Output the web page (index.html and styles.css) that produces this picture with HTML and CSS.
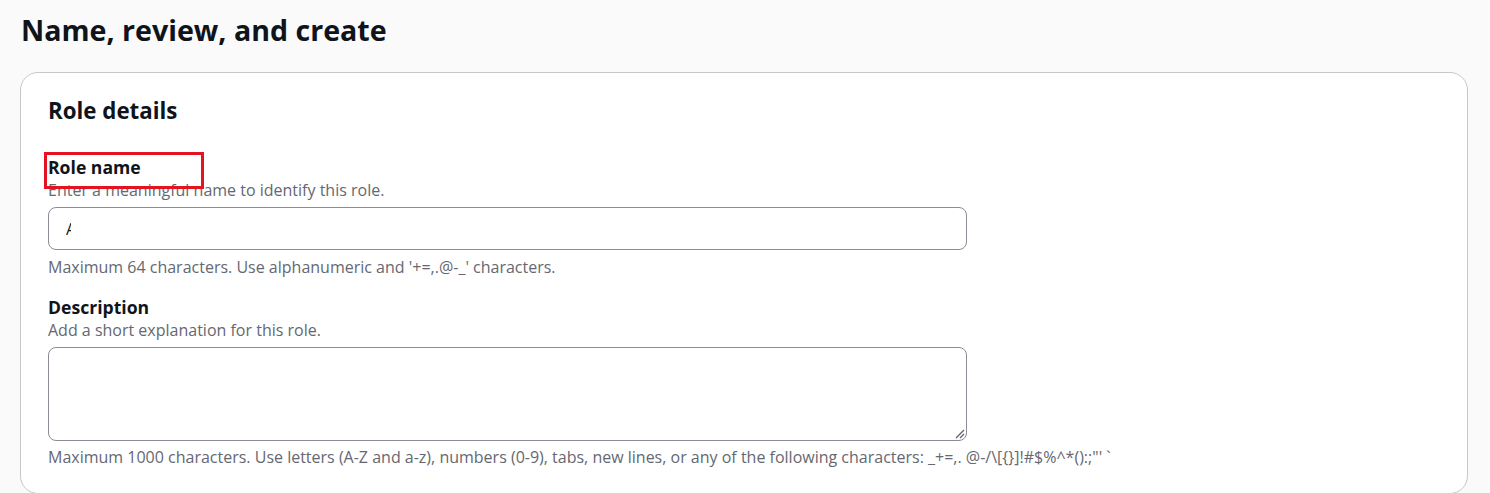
FILE: index.html
```html
<!DOCTYPE html>
<html lang="en">
<head>
<meta charset="utf-8">
<title>Name, review, and create</title>
<link rel="stylesheet" href="styles.css">
</head>
<body>
<main class="page">
  <h1 class="page-title">Name, review, and create</h1>
  <section class="card">
    <h2 class="card-title">Role details</h2>
    <div class="field field-first">
      <div class="label-wrap">
        <label class="label" for="role-name">Role name</label>
        <span class="highlight"></span>
      </div>
      <div class="desc">Enter a meaningful name to identify this role.</div>
      <div class="input"><span class="typed">A</span></div>
      <div class="constraint">Maximum 64 characters. Use alphanumeric and '+=,.@-_' characters.</div>
    </div>
    <div class="field field-second">
      <label class="label" for="role-desc">Description</label>
      <div class="desc">Add a short explanation for this role.</div>
      <div class="textarea">
        <svg class="grip" width="12" height="12" viewBox="0 0 12 12"><path d="M11 3 L3 11 M11 7 L7 11" stroke="#5f6370" stroke-width="1.3" fill="none"/></svg>
      </div>
      <div class="constraint constraint-last">Maximum 1000 characters. Use letters (A-Z and a-z), numbers (0-9), tabs, new lines, or any of the following characters: _+=,. @-/\[{}]!#$%^*():;"' `</div>
    </div>
  </section>
</main>
</body>
</html>
```

FILE: styles.css
```css
* { box-sizing: border-box; }
html, body { margin: 0; padding: 0; }
body {
  background: #fafafa;
  font-family: "Open Sans", "Noto Sans", sans-serif;
  color: #0f141a;
  height: 493px;
  overflow: hidden;
}
.page {
  padding: 10px 22px 0 20px;
}
.page-title {
  margin: 0 0 0 1px;
  font-size: 28.6px;
  line-height: 40px;
  font-weight: 700;
}
.card {
  margin-top: 22px;
  background: #ffffff;
  border: 1px solid #c6c6cd;
  border-radius: 18px;
  padding: 23px 27px 0 27px;
  height: 422px;
}
.card-title {
  margin: 0;
  font-size: 22.3px;
  line-height: 30px;
  font-weight: 700;
}
.field-first { margin-top: 29px; }
.field-second { margin-top: 17px; }
.label-wrap { position: relative; }
.label {
  display: block;
  font-size: 17.6px;
  line-height: 24px;
  font-weight: 700;
}
.highlight {
  position: absolute;
  left: -4px;
  top: -3px;
  width: 160px;
  height: 37px;
  border: 3px solid #e3141f;
}
.desc {
  font-size: 16px;
  line-height: 22px;
  color: #656871;
}
.input {
  margin-top: 6px;
  width: 919px;
  height: 43px;
  border: 1px solid #8c8c94;
  border-radius: 8px;
  padding: 0 0 0 17px;
  display: flex;
  align-items: center;
  font-size: 16px;
}
.typed {
  display: inline-block;
  width: 5px;
  overflow: hidden;
  color: #0f141a;
}
.textarea {
  position: relative;
  margin-top: 6px;
  width: 919px;
  height: 94px;
  border: 1px solid #8c8c94;
  border-radius: 8px;
}
.grip {
  position: absolute;
  right: 1px;
  bottom: 1px;
}
.constraint {
  margin-top: 6px;
  font-size: 16px;
  line-height: 22px;
  color: #656871;
}
.constraint-last { margin-top: 5px; }
```
